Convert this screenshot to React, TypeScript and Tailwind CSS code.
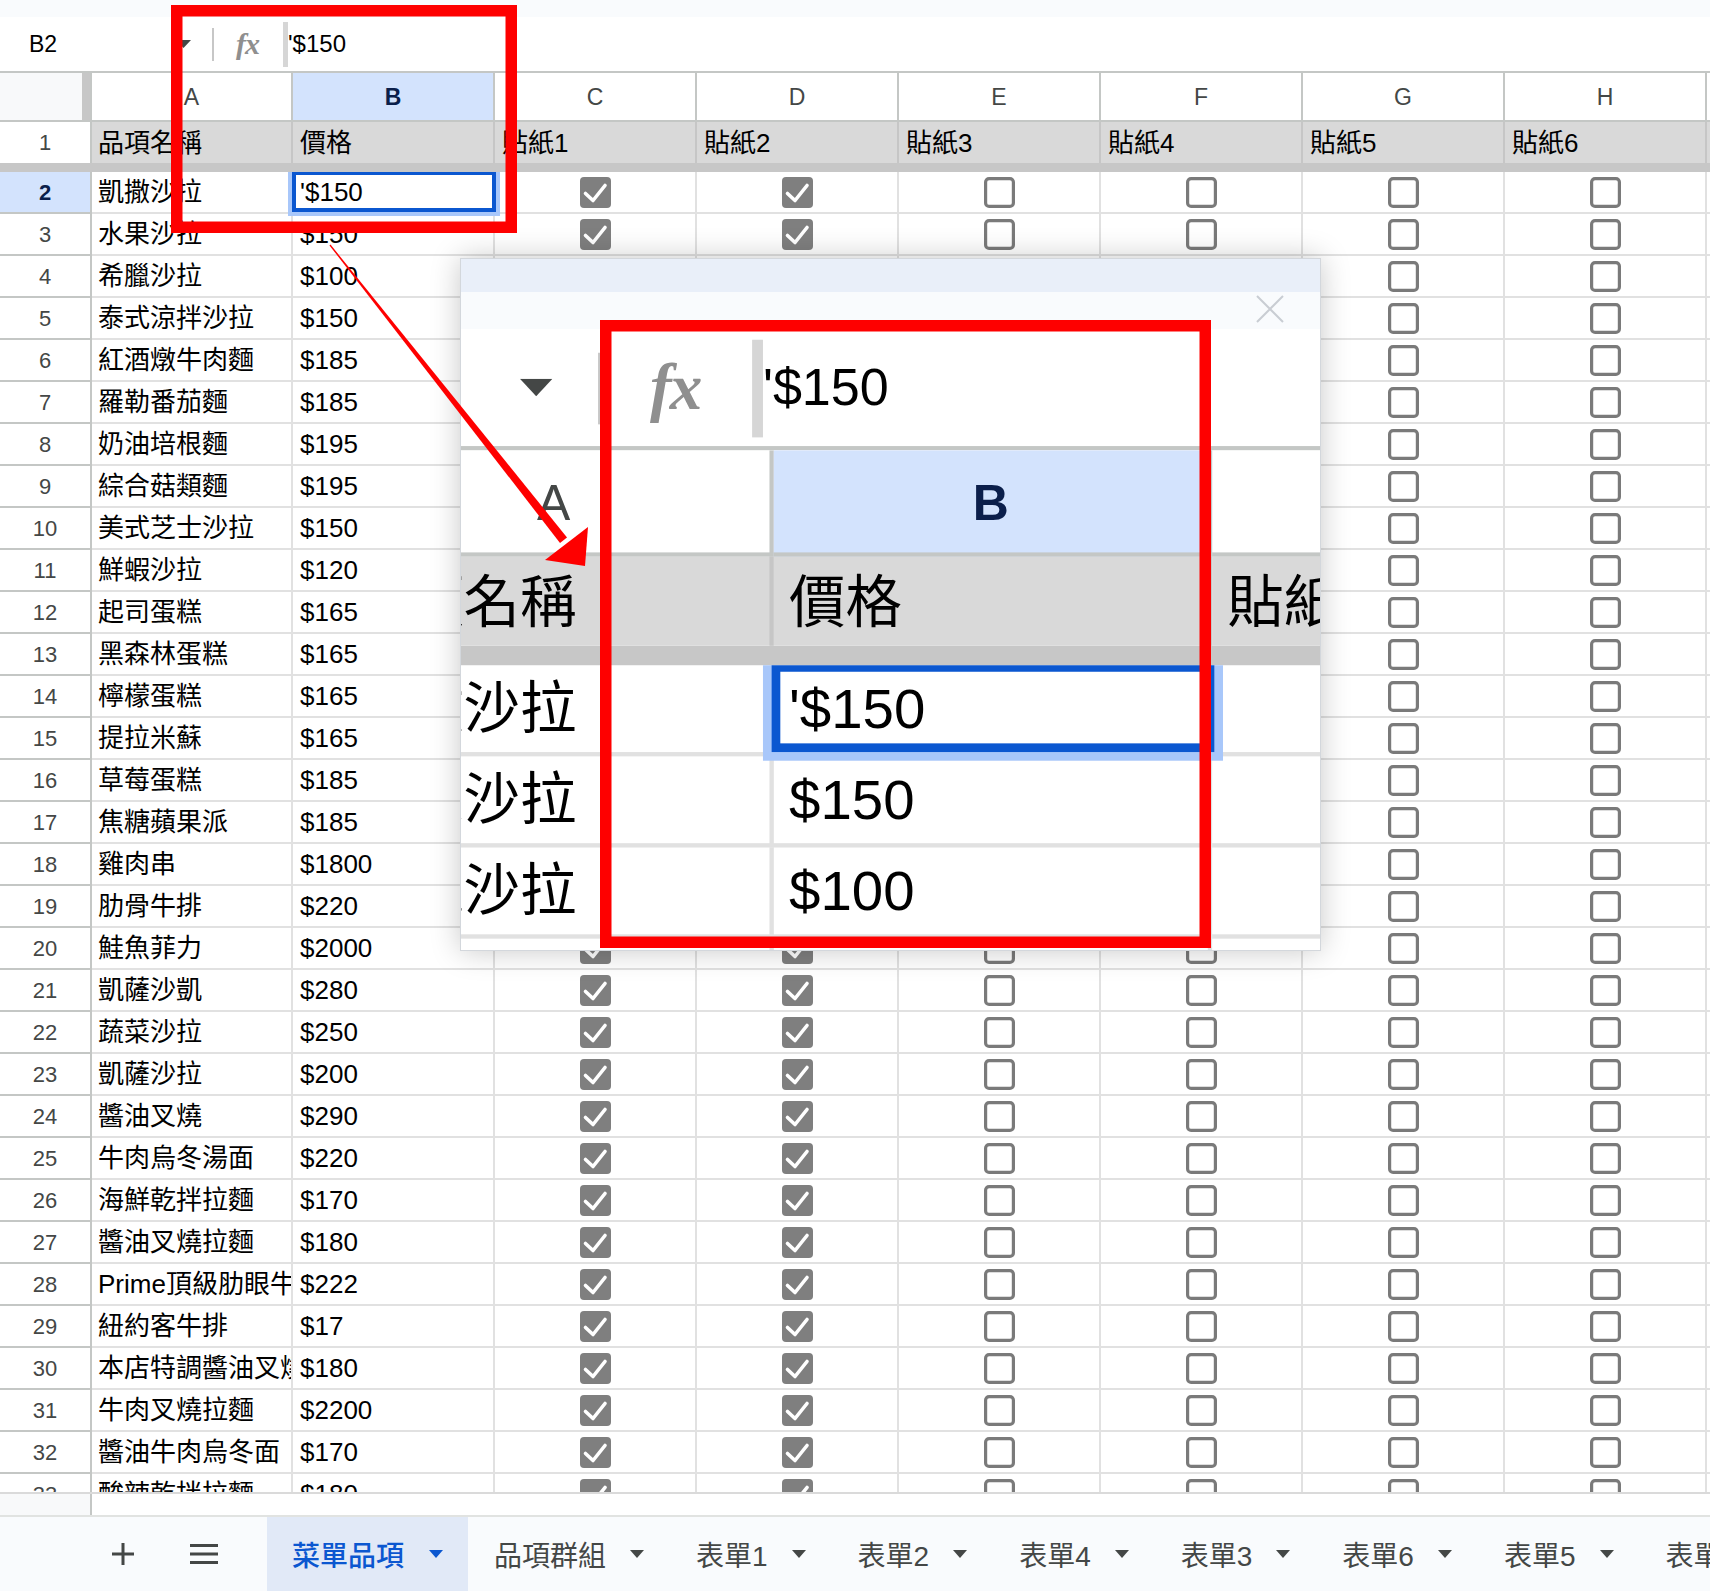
import React from 'react';

type Item = { name: string; price: string };

const ITEMS: Item[] = [
  { name: '凱撒沙拉', price: "'$150" },
  { name: '水果沙拉', price: '$150' },
  { name: '希臘沙拉', price: '$100' },
  { name: '泰式涼拌沙拉', price: '$150' },
  { name: '紅酒燉牛肉麵', price: '$185' },
  { name: '羅勒番茄麵', price: '$185' },
  { name: '奶油培根麵', price: '$195' },
  { name: '綜合菇類麵', price: '$195' },
  { name: '美式芝士沙拉', price: '$150' },
  { name: '鮮蝦沙拉', price: '$120' },
  { name: '起司蛋糕', price: '$165' },
  { name: '黑森林蛋糕', price: '$165' },
  { name: '檸檬蛋糕', price: '$165' },
  { name: '提拉米蘇', price: '$165' },
  { name: '草莓蛋糕', price: '$185' },
  { name: '焦糖蘋果派', price: '$185' },
  { name: '雞肉串', price: '$1800' },
  { name: '肋骨牛排', price: '$220' },
  { name: '鮭魚菲力', price: '$2000' },
  { name: '凱薩沙凱', price: '$280' },
  { name: '蔬菜沙拉', price: '$250' },
  { name: '凱薩沙拉', price: '$200' },
  { name: '醬油叉燒', price: '$290' },
  { name: '牛肉烏冬湯面', price: '$220' },
  { name: '海鮮乾拌拉麵', price: '$170' },
  { name: '醬油叉燒拉麵', price: '$180' },
  { name: 'Prime頂級肋眼牛排', price: '$222' },
  { name: '紐約客牛排', price: '$17' },
  { name: '本店特調醬油叉燒拉麵', price: '$180' },
  { name: '牛肉叉燒拉麵', price: '$2200' },
  { name: '醬油牛肉烏冬面', price: '$170' },
  { name: '酸辣乾拌拉麵', price: '$180' },
];

const COLS = ['A', 'B', 'C', 'D', 'E', 'F', 'G', 'H'];
const HEADS = ['品項名稱', '價格', '貼紙1', '貼紙2', '貼紙3', '貼紙4', '貼紙5', '貼紙6'];
const STICKERS = [true, true, false, false, false, false];
const TABS = ['品項群組', '表單1', '表單2', '表單4', '表單3', '表單6', '表單5', '表單7'];

function Tri({ w = 14, h = 8 }: { w?: number; h?: number }) {
  return (
    <svg width={w} height={h} viewBox={`0 0 ${w} ${h}`} className="shrink-0">
      <path d={`M0 0H${w}L${w / 2} ${h}Z`} fill="currentColor" />
    </svg>
  );
}

function Check({ on }: { on: boolean }) {
  if (on) {
    return (
      <svg width="31" height="31" viewBox="0 0 31 31">
        <rect x="0" y="0" width="31" height="31" rx="4" fill="#7f7f7f" />
        <path d="M5.5 16.5L13 23.5L25 8.5" stroke="#fff" strokeWidth="3.6" fill="none" strokeLinecap="round" strokeLinejoin="round" />
      </svg>
    );
  }
  return (
    <svg width="31" height="31" viewBox="0 0 31 31">
      <rect x="1.6" y="1.6" width="27.8" height="27.8" rx="3.5" fill="#fff" stroke="#7a7a7a" strokeWidth="3.2" />
    </svg>
  );
}

function FormulaBar() {
  return (
    <div className="flex h-[56px] items-center border-b-2 border-[#c4c7c5] bg-white">
      <div className="w-[176px] shrink-0 pl-[29px] text-[23px] leading-none text-black">B2</div>
      <div className="text-[#444746]">
        <Tri w={15} h={8} />
      </div>
      <div className="ml-[21px] h-[33px] w-[2px] bg-[#c7c7c7]" />
      <div className="ml-[22px] w-[28px] font-['Liberation_Serif',serif] text-[30px] font-bold italic leading-none tracking-[-1px] text-[#8f8f8f]">
        fx
      </div>
      <div className="ml-[19px] h-[45px] w-[5px] bg-[#d6d6d6]" />
      <div className="text-[24px] leading-none text-black">'$150</div>
    </div>
  );
}

function DataRow({ n, item }: { n: number; item: Item }) {
  const sel = n === 2;
  return (
    <div className="flex h-[42px]">
      <div
        className={
          sel
            ? 'flex w-[92px] shrink-0 items-center justify-center border-b-2 border-r-2 border-[#c4c7c5] bg-[#d3e3fd] text-[22px] font-bold text-[#0b1f4b]'
            : 'flex w-[92px] shrink-0 items-center justify-center border-b-2 border-r-2 border-[#c4c7c5] bg-white text-[22px] text-[#444746]'
        }
      >
        {n}
      </div>
      <div className="flex w-[201px] shrink-0 items-center overflow-hidden whitespace-nowrap border-b-2 border-r-2 border-[#e1e1e1] pl-[6px] text-[26px] text-black">
        {item.name}
      </div>
      <div className="relative flex w-[202px] shrink-0 items-center whitespace-nowrap border-b-2 border-r-2 border-[#e1e1e1] pl-[7px] text-[26px] text-black">
        {item.price}
        {sel && (
          <div className="absolute -left-[1px] -top-[1px] -right-[3px] bottom-0 z-10 border-4 border-[#0b57d0] shadow-[0_0_0_4px_#a8c7fa]" />
        )}
      </div>
      {STICKERS.map((on, i) => (
        <div key={i} className="flex w-[202px] shrink-0 items-center justify-center border-b-2 border-r-2 border-[#e1e1e1]">
          <Check on={on} />
        </div>
      ))}
      <div className="flex-1 border-b-2 border-[#e1e1e1]" />
    </div>
  );
}

function Sheet({ bodyClass, rows }: { bodyClass: string; rows: Item[] }) {
  return (
    <div className="w-[1710px] bg-white font-['Liberation_Sans','Noto_Sans_CJK_TC',sans-serif]">
      <div className="h-[17px] bg-[#f9fbfd]" />
      <FormulaBar />

      {/* column letters */}
      <div className="flex h-[49px] bg-white">
        <div className="flex w-[92px] shrink-0 border-b-2 border-r-2 border-[#c4c7c5]">
          <div className="w-[82px] bg-[#f8f9fa]" />
          <div className="w-[8px] bg-[#c7c7c7]" />
        </div>
        {COLS.map((c, i) => (
          <div
            key={c}
            className={
              c === 'B'
                ? 'flex w-[202px] shrink-0 items-center justify-center border-b-2 border-r-2 border-[#c4c7c5] bg-[#d3e3fd] pt-[2px] text-[23px] font-bold text-[#0b1f4b]'
                : i === 0
                  ? 'flex w-[201px] shrink-0 items-center justify-center border-b-2 border-r-2 border-[#c4c7c5] pt-[2px] text-[23px] text-[#444746]'
                  : 'flex w-[202px] shrink-0 items-center justify-center border-b-2 border-r-2 border-[#c4c7c5] pt-[2px] text-[23px] text-[#444746]'
            }
          >
            {c}
          </div>
        ))}
        <div className="flex-1 border-b-2 border-[#c4c7c5]" />
      </div>

      {/* frozen header row */}
      <div className="flex h-[41px]">
        <div className="flex w-[92px] shrink-0 items-center justify-center border-r-2 border-[#c4c7c5] bg-white text-[22px] text-[#444746]">
          1
        </div>
        {HEADS.map((h, i) => (
          <div
            key={h}
            className={
              i === 0
                ? 'flex w-[201px] shrink-0 items-center whitespace-nowrap border-r-2 border-[#c6c6c6] bg-[#d9d9d9] pl-[6px] pt-[2px] text-[26px] text-black'
                : 'flex w-[202px] shrink-0 items-center whitespace-nowrap border-r-2 border-[#c6c6c6] bg-[#d9d9d9] pl-[7px] pt-[2px] text-[26px] text-black'
            }
          >
            {h}
          </div>
        ))}
        <div className="flex-1 bg-[#d9d9d9]" />
      </div>
      <div className="h-[9px] bg-[#c7c7c7]" />

      <div className={bodyClass}>
        {rows.map((item, i) => (
          <DataRow key={i} n={i + 2} item={item} />
        ))}
      </div>
    </div>
  );
}

function Magnifier() {
  return (
    <div className="absolute left-[460px] top-[258px] h-[693px] w-[861px] overflow-hidden border border-[#d3d7dc] bg-white shadow-[0_0_28px_rgba(0,0,0,0.22)]">
      <div className="h-[33px] bg-[#e9eff9]" />
      <div className="h-[658px] overflow-hidden">
        <div className="-ml-[323px] w-[1710px] origin-top-left scale-[2.17]">
          <Sheet bodyClass="h-[200px] overflow-hidden" rows={ITEMS.slice(0, 4)} />
        </div>
      </div>
      <svg className="absolute left-[795px] top-[36px]" width="28" height="28" viewBox="0 0 28 28">
        <path d="M1 1L27 27M27 1L1 27" stroke="#c9cdd3" strokeWidth="2" />
      </svg>
    </div>
  );
}

function Annotations() {
  return (
    <svg className="pointer-events-none absolute left-0 top-0 z-20" width="1710" height="1591" viewBox="0 0 1710 1591">
      <rect x="176.75" y="10.75" width="334.5" height="216.5" fill="none" stroke="#fe0000" strokeWidth="11.5" />
      <rect x="605.75" y="325.75" width="599.5" height="616.5" fill="none" stroke="#fe0000" strokeWidth="11.5" />
      <polygon points="330.5,244.6 567,537.4 560,543 329.5,245.4" fill="#fe0000" />
      <polygon points="588,527 545,560 585,566" fill="#fe0000" />
    </svg>
  );
}

function SheetTabs() {
  return (
    <div className="flex h-[76px] items-center overflow-hidden whitespace-nowrap border-t-2 border-[#e1e3e1] bg-[#f9fbfd] font-['Liberation_Sans','Noto_Sans_CJK_TC',sans-serif] text-[28px] text-[#444746]">
      <svg className="ml-[111px] shrink-0" width="24" height="24" viewBox="0 0 24 24">
        <path d="M12 1V23M1 12H23" stroke="#444746" strokeWidth="3" />
      </svg>
      <svg className="ml-[55px] shrink-0" width="28" height="20" viewBox="0 0 28 20">
        <path d="M0 1.5H28M0 10H28M0 18.5H28" stroke="#444746" strokeWidth="3" />
      </svg>
      <div className="ml-[49px] flex h-full shrink-0 items-center gap-[25px] bg-[#e1e9f7] px-[25px] font-medium text-[#0b57d0]">
        <span className="pt-[6px]">菜單品項</span>
        <Tri />
      </div>
      {TABS.map((t) => (
        <div key={t} className="flex h-full shrink-0 items-center gap-[24px] px-[26px]">
          <span className="pt-[6px]">{t}</span>
          <Tri />
        </div>
      ))}
    </div>
  );
}

export default function App() {
  return (
    <div className="relative h-[1591px] w-[1710px] overflow-hidden bg-white">
      <Sheet bodyClass="h-[1320px] overflow-hidden" rows={ITEMS} />
      <div className="flex h-[23px] border-t-2 border-[#dadada]">
        <div className="w-[92px] border-r-2 border-[#c4c7c5] bg-[#f8f9fa]" />
      </div>
      <SheetTabs />

      <Magnifier />
      <Annotations />
    </div>
  );
}
